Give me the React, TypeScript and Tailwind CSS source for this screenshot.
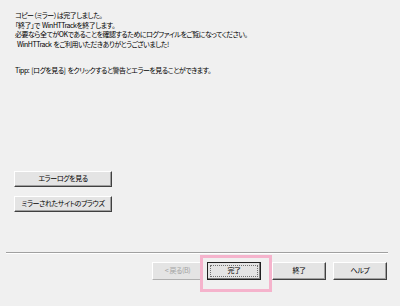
const font = "font-['Noto_Sans_CJK_JP','Noto_Sans',sans-serif] [font-feature-settings:'palt']";

function ClassicButton({ label, className = '', disabled = false }: { label: string; className?: string; disabled?: boolean }) {
  return (
    <div
      className={`flex items-center justify-center whitespace-nowrap bg-[#e4e4e4] border border-t-white border-l-white border-r-[#404040] border-b-[#404040] shadow-[inset_-1px_-1px_0_#a0a0a0] text-[7px] tracking-[-0.4px] leading-none ${disabled ? 'text-[#a3a3a3]' : 'text-black'} ${className}`}
    >
      {label}
    </div>
  );
}

export default function App() {
  return (
    <div className={`relative w-[400px] h-[306px] bg-[#f0f0f0] text-black overflow-hidden ${font}`}>
      {/* message */}
      <div className="pt-[11px] pl-[15px] text-[7px] leading-[9.6px] tracking-[-0.5px] [word-spacing:1px]">
        <div>コピー（ミラー）は完了しました。</div>
        <div>「終了」で WinHTTrackを終了します。</div>
        <div>必要なら全てがOKであることを確認するためにログファイルをご覧になってください。</div>
        <div className="pl-[2px]">WinHTTrack をご利用いただきありがとうございました!</div>
      </div>

      <div className="mt-[17px] pl-[15px] text-[7px] leading-[9.6px] tracking-[-0.5px] [word-spacing:1px]">
        Tipp: [ログを見る] をクリックすると警告とエラーを見ることができます。
      </div>

      {/* log buttons */}
      <div className="mt-[95px] pl-[14px] flex flex-col gap-[9px]">
        <ClassicButton label="エラーログを見る" className="w-[98px] h-[16px]" />
        <ClassicButton label="ミラーされたサイトのブラウズ" className="w-[98px] h-[16px]" />
      </div>

      {/* separator */}
      <div className="mt-[40px] mx-[6px] w-[382px] h-[2px] border-t border-t-[#a0a0a0] border-b border-b-white" />

      {/* wizard buttons */}
      <div className="mt-[8px] flex items-center">
        <ClassicButton label="< 戻る(B)" disabled className="ml-[152px] w-[51px] h-[18px] border-r-[#b0b0b0] border-b-[#b0b0b0] shadow-none" />
        <div className="ml-[4px] w-[54px] h-[18px] border border-[#202020] bg-[#e4e4e4] p-[2px] shadow-[inset_-1px_-1px_0_#808080]">
          <div className="w-full h-full border border-dotted border-[#707070] flex items-center justify-center text-[7px] tracking-[-0.4px] leading-none">
            完了
          </div>
        </div>
        <ClassicButton label="終了" className="ml-[11px] w-[54px] h-[18px]" />
        <ClassicButton label="ヘルプ" className="ml-[7px] w-[54px] h-[18px]" />
      </div>

      {/* highlight annotation */}
      <div className="absolute left-[200px] top-[255px] w-[72px] h-[37px] border-[3px] border-[#f5b3cc]" />
    </div>
  );
}
